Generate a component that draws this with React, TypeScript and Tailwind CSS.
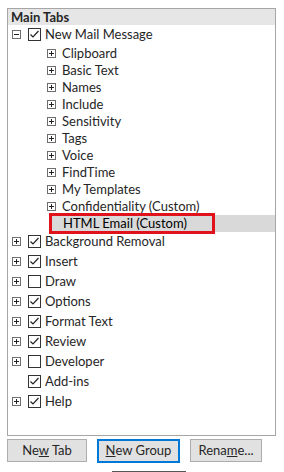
import React from "react";

const Expand = ({ open = false }: { open?: boolean }) => (
  <svg width="9" height="9" viewBox="0 0 9 9" className="shrink-0">
    <rect x="0.5" y="0.5" width="8" height="8" fill="white" stroke="#6e6e6e" />
    <line x1="2" y1="4.5" x2="7" y2="4.5" stroke="#222" />
    {!open && <line x1="4.5" y1="2" x2="4.5" y2="7" stroke="#222" />}
  </svg>
);

const Check = ({ checked }: { checked: boolean }) => (
  <svg width="13" height="13" viewBox="0 0 13 13" className="shrink-0">
    <rect x="0.5" y="0.5" width="12" height="12" fill="white" stroke="#333" />
    {checked && (
      <path d="M2.5 6.5 L5 9 L10.5 3" fill="none" stroke="#222" strokeWidth="1.2" />
    )}
  </svg>
);

const subItems = [
  "Clipboard",
  "Basic Text",
  "Names",
  "Include",
  "Sensitivity",
  "Tags",
  "Voice",
  "FindTime",
  "My Templates",
  "Confidentiality (Custom)",
];

const topItems: { label: string; checked: boolean; expand: boolean }[] = [
  { label: "Insert", checked: true, expand: true },
  { label: "Draw", checked: false, expand: true },
  { label: "Options", checked: true, expand: true },
  { label: "Format Text", checked: true, expand: true },
  { label: "Review", checked: true, expand: true },
  { label: "Developer", checked: false, expand: true },
  { label: "Add-ins", checked: true, expand: false },
  { label: "Help", checked: true, expand: true },
];

export default function App() {
  return (
    <div
      className="w-[284px] h-[472px] bg-white overflow-hidden text-[13px] text-[#262626]"
      style={{ fontFamily: 'Lato, "Noto Sans", sans-serif' }}
    >
      <div className="pt-[8px] pl-[7px] pr-[8px]">
        <div className="h-[428px] border border-[#a6a6a6] relative">
          <div className="h-[16px] bg-[#e6e6e6] flex items-center pl-[3px] font-bold leading-none">
            Main Tabs
          </div>
          <div className="h-[16px] flex items-center pl-[4px] mt-[1px]">
            <Expand open />
            <span className="ml-[7px]"><Check checked /></span>
            <span className="ml-[4px] leading-none">New Mail Message</span>
          </div>
          <div className="mt-[3px]">
            {subItems.map((s) => (
              <div key={s} className="h-[17px] flex items-center pl-[39px]">
                <Expand />
                <span className="ml-[6px] leading-none">{s}</span>
              </div>
            ))}
            <div className="h-[17px] flex items-center ml-[42px] bg-[#d9d9d9] pl-[13px]">
              <span className="leading-none text-black">HTML Email (Custom)</span>
            </div>
          </div>
          <div className="h-[20px] flex items-center pl-[4px] -mt-[1px]">
            <Expand />
            <span className="ml-[7px]"><Check checked /></span>
            <span className="ml-[4px] leading-none">Background Removal</span>
          </div>
          {topItems.map((t) => (
            <div key={t.label} className="h-[20px] flex items-center pl-[4px]">
              {t.expand ? <Expand /> : <span className="w-[9px] shrink-0" />}
              <span className="ml-[7px]"><Check checked={t.checked} /></span>
              <span className="ml-[4px] leading-none">{t.label}</span>
            </div>
          ))}
          <div className="absolute left-[41px] top-[204px] w-[166px] h-[21px] border-[3px] border-[#e0121c]" />
        </div>
      </div>
      <div className="flex pl-[7px] pt-[3px] gap-[10px]">
        <div className="w-[80px] h-[23px] bg-[#e1e1e1] border border-[#adadad] flex items-center justify-center">
          Ne<span className="underline">w</span>&nbsp;Tab
        </div>
        <div className="w-[83px] h-[24px] bg-[#e1e1e1] border-2 border-[#0078d7] flex items-center justify-center">
          <span className="underline">N</span>ew Group
        </div>
        <div className="w-[72px] h-[23px] bg-[#e1e1e1] border border-[#adadad] flex items-center justify-center">
          Rena<span className="underline">m</span>e...
        </div>
      </div>
      <div className="ml-[112px] mt-[8px] w-[74px] border-t border-[#555]" />
    </div>
  );
}
